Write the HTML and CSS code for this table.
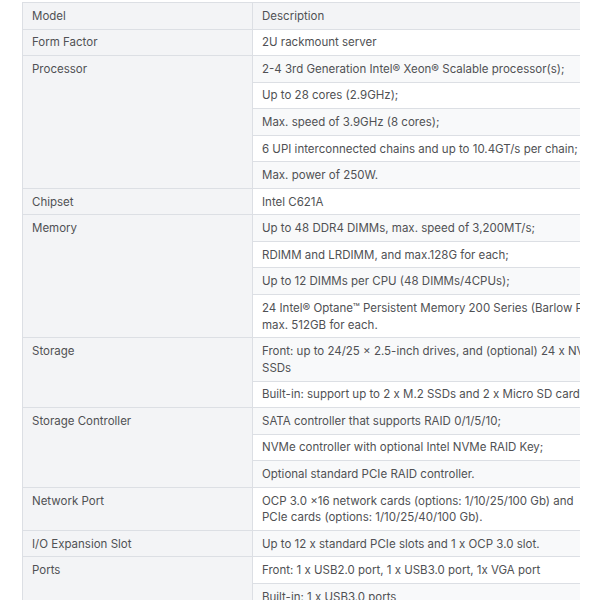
FILE: index.html
```html
<!DOCTYPE html>
<html lang="en">
<head>
<meta charset="utf-8">
<title>Specifications</title>
<link rel="stylesheet" href="styles.css">
</head>
<body>
<div class="wrap">
<table class="spec">
<thead>
<tr><th class="label">Model</th><th class="desc">Description</th></tr>
</thead>
<tbody>
<tr><td class="label">Form Factor</td><td class="desc">2U rackmount server</td></tr>
<tr><td class="label" rowspan="5">Processor</td><td class="desc">2-4 3rd Generation Intel® Xeon® Scalable processor(s);</td></tr>
<tr><td class="desc">Up to 28 cores (2.9GHz);</td></tr>
<tr><td class="desc">Max. speed of 3.9GHz (8 cores);</td></tr>
<tr><td class="desc">6 UPI interconnected chains and up to 10.4GT/s per chain;</td></tr>
<tr><td class="desc">Max. power of 250W.</td></tr>
<tr><td class="label">Chipset</td><td class="desc">Intel C621A</td></tr>
<tr><td class="label" rowspan="4">Memory</td><td class="desc">Up to 48 DDR4 DIMMs, max. speed of 3,200MT/s;</td></tr>
<tr><td class="desc">RDIMM and LRDIMM, and max.128G for each;</td></tr>
<tr><td class="desc">Up to 12 DIMMs per CPU (48 DIMMs/4CPUs);</td></tr>
<tr><td class="desc">24 Intel® Optane™ Persistent Memory 200 Series (Barlow Pass),<br>max. 512GB for each.</td></tr>
<tr><td class="label" rowspan="2">Storage</td><td class="desc">Front: up to 24/25 × 2.5-inch drives, and (optional) 24 x NVMe<br>SSDs</td></tr>
<tr><td class="desc">Built-in: support up to 2 x M.2 SSDs and 2 x Micro SD cards</td></tr>
<tr><td class="label" rowspan="3">Storage Controller</td><td class="desc">SATA controller that supports RAID 0/1/5/10;</td></tr>
<tr><td class="desc">NVMe controller with optional Intel NVMe RAID Key;</td></tr>
<tr><td class="desc">Optional standard PCIe RAID controller.</td></tr>
<tr><td class="label">Network Port</td><td class="desc">OCP 3.0 ×16 network cards (options: 1/10/25/100 Gb) and<br>PCIe cards (options: 1/10/25/40/100 Gb).</td></tr>
<tr><td class="label">I/O Expansion Slot</td><td class="desc">Up to 12 x standard PCIe slots and 1 x OCP 3.0 slot.</td></tr>
<tr><td class="label" rowspan="2">Ports</td><td class="desc">Front: 1 x USB2.0 port, 1 x USB3.0 port, 1x VGA port</td></tr>
<tr><td class="desc">Built-in: 1 x USB3.0 ports</td></tr>
</tbody>
</table>
</div>
</body>
</html>
```
FILE: styles.css
```css
html, body {
  margin: 0;
  padding: 0;
  background: #ffffff;
}
body {
  font-family: Inter, "Noto Sans", "Liberation Sans", sans-serif;
  font-size: 11.5px;
  color: #505154;
}
.wrap {
  margin: 2px 0 0 22px;
  width: 558px;
  overflow: hidden;
}
.spec {
  border-collapse: collapse;
  table-layout: fixed;
  width: 620px;
}
.spec th,
.spec td {
  border: 1px solid #dcdfe4;
  padding: 4.9px 8px 3.85px 9px;
  line-height: 16.8px;
  text-align: left;
  vertical-align: top;
  font-weight: 400;
  white-space: nowrap;
}
.spec .label {
  width: 212px;
  background: #f3f4f6;
}
.spec .desc {
  background: #ffffff;
}
.spec thead .desc {
  background: #f3f4f6;
}
.spec tbody tr:nth-child(even) .desc {
  background: #f8f9fa;
}
```
